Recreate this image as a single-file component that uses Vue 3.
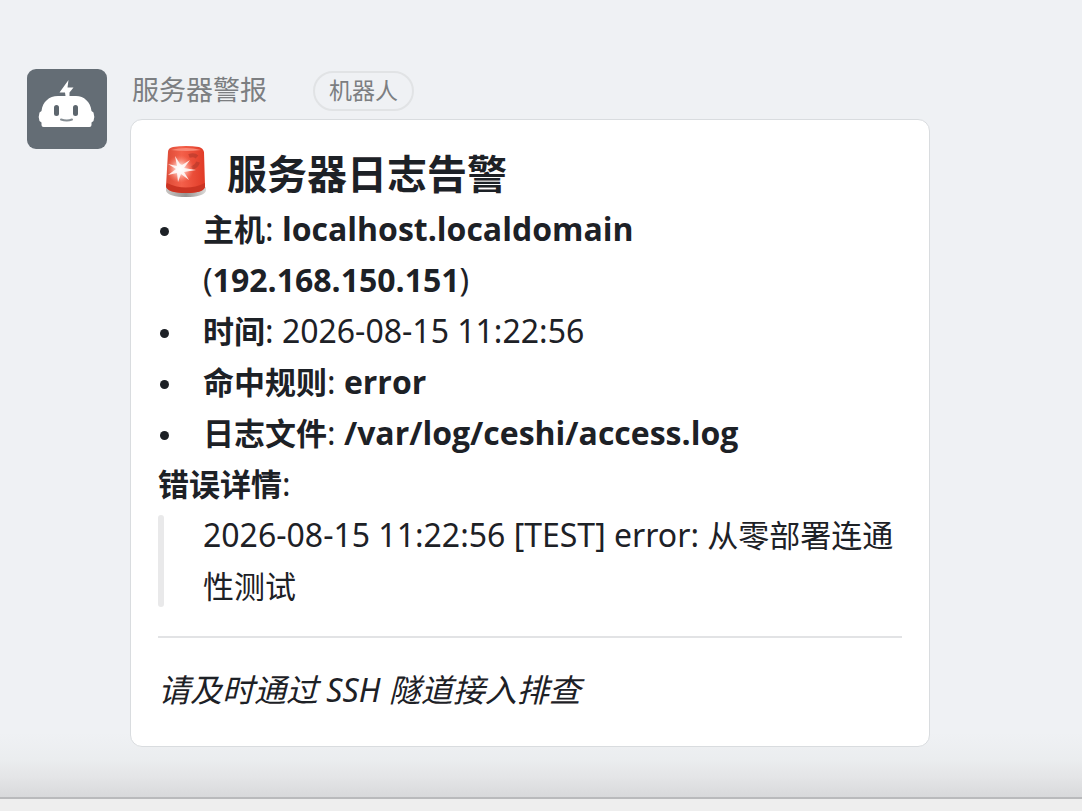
<script setup>
const rows = [
  { label: '主机', parts: [{ text: 'localhost.localdomain', bold: true }, { text: ' (' }, { text: '192.168.150.151', bold: true }, { text: ')' }] },
  { label: '时间', parts: [{ text: '2026-08-15 11:22:56' }] },
  { label: '命中规则', parts: [{ text: 'error', bold: true }] },
  { label: '日志文件', parts: [{ text: '/var/log/ceshi/access.log', bold: true }] },
]
</script>

<template>
  <div class="page">
    <main class="chat">
      <article class="message">
        <svg class="avatar" viewBox="0 0 80 80" role="img" aria-label="机器人头像">
          <rect width="80" height="80" rx="9" fill="#646d75" />
          <path d="M41.500 11 32.500 23.500h5.500L38.500 27H31C22 27 15.500 33 14.500 42l-2 1.500q-1.500 4 0 8.500l2 1.500v2.500q0 2 2 2h46q2 0 2-2v-2.500l2-1.500q1.500-4.500 0-8.500l-2-1.500C63.500 33 57 27 49 27h-6.500v-3.500l4-5h-6z" fill="#fff" />
          <rect x="27" y="36" width="5" height="11" rx="2.500" fill="#5d666e" />
          <rect x="46" y="36" width="5" height="11" rx="2.500" fill="#5d666e" />
          <path d="M34 50.500q6 2 11 0" fill="none" stroke="#858d93" stroke-width="2" stroke-linecap="round" />
        </svg>
        <div class="body">
          <header class="sender">
            <span class="name">服务器警报</span>
            <span class="tag">机器人</span>
          </header>
          <section class="card">
            <h1 class="title">
              <svg class="siren" viewBox="0 0 42 54" aria-hidden="true">
                <defs>
                  <linearGradient id="glass" x1="0" y1="0" x2="1" y2="0">
                    <stop offset="0" stop-color="#dc4a36" />
                    <stop offset=".4" stop-color="#f4604a" />
                    <stop offset="1" stop-color="#e03a26" />
                  </linearGradient>
                  <linearGradient id="base" x1="0" y1="0" x2="1" y2="0">
                    <stop offset="0" stop-color="#c9c6c4" />
                    <stop offset=".5" stop-color="#979391" />
                    <stop offset="1" stop-color="#dcdad8" />
                  </linearGradient>
                  <radialGradient id="glow">
                    <stop offset="0" stop-color="#fff" />
                    <stop offset=".35" stop-color="#ffd9d2" stop-opacity=".8" />
                    <stop offset="1" stop-color="#ff8a75" stop-opacity="0" />
                  </radialGradient>
                </defs>
                <path d="M1 42q20 8 40 0v4q-3 6-20 6T1 46z" fill="url(#base)" />
                <path d="M3 7q0-4 5-5 13-2 26 0 4 1 5 5l1 34q0 7-19 7T1 41z" fill="url(#glass)" />
                <path d="M2 38q19 9 38 0v3q0 7-19 7T1 41z" fill="#cb3423" />
                <path d="M6 5q15-4 30 0-15 2-30 0z" fill="#f98a78" />
                <path d="M24 11q5-2 8 1M33 17q-1 4-6 6" fill="none" stroke="#b5392b" stroke-width="4" opacity=".65" />
                <circle cx="15" cy="24" r="14" fill="url(#glow)" />
                <path d="m15 19-5-8 2 10-9-2 8 5-8 6 9-2 1 9 3-8 8 6-5-8 12-2-12-2 6-8-8 5z" fill="#fff" opacity=".85" />
              </svg>
              <span>服务器日志告警</span>
            </h1>
            <ul class="facts">
              <li v-for="row in rows" :key="row.label">
                <strong>{{ row.label }}</strong><span class="latin">: <template v-for="part in row.parts" :key="part.text"><strong v-if="part.bold" class="value">{{ part.text }}</strong><template v-else>{{ part.text }}</template></template></span>
              </li>
            </ul>
            <p class="line"><strong>错误详情</strong><span class="latin">:</span></p>
            <blockquote class="quote"><span class="latin">2026-08-15 11:22:56 [TEST] error: </span>从零部署连通性测试</blockquote>
            <hr class="rule" />
            <p class="line note"><em>请及时通过<span class="latin"> SSH </span>隧道接入排查</em></p>
          </section>
        </div>
      </article>
    </main>
    <footer class="composer"></footer>
  </div>
</template>

<style>
body {
  margin: 0;
}
</style>

<style scoped>
.page {
  box-sizing: border-box;
  min-height: 100vh;
  display: flex;
  flex-direction: column;
  background: #eff1f4;
  color: #1d2126;
  font-family: "Noto Sans CJK SC", sans-serif;
}
.chat {
  flex: 1;
  padding: 69px 152px 50px 27px;
  background: linear-gradient(to top, #d8d9db 0, #e4e5e7 20px, #ebedef 38px, #eff1f4 64px);
}
.message {
  display: flex;
  align-items: flex-start;
  gap: 23px;
}
.avatar {
  width: 80px;
  height: 80px;
  flex: none;
}
.body {
  flex: 1;
  min-width: 0;
}
.sender {
  display: flex;
  align-items: center;
  gap: 46px;
  height: 44px;
  padding-left: 2px;
  margin-bottom: 6px;
  color: #7c7e81;
}
.name {
  padding-bottom: 4px;
  font-size: 27px;
  line-height: 40px;
}
.tag {
  box-sizing: border-box;
  height: 40px;
  padding: 0 14px;
  border: 2px solid #e1e3e5;
  border-radius: 20px;
  font-size: 23px;
  line-height: 33px;
}
.card {
  padding: 22px 27px 32px;
  border: 1px solid #d9dcdf;
  border-radius: 12px;
  background: #fff;
  font-size: 31px;
  line-height: 51px;
}
.title {
  display: flex;
  align-items: center;
  gap: 20px;
  margin: 0;
  padding-left: 7px;
  font-size: 40px;
  font-weight: 700;
  line-height: 60px;
}
.siren {
  width: 42px;
  height: 54px;
}
.facts {
  margin: 0;
  padding: 0;
  list-style: none;
}
.facts li {
  display: flow-root;
  position: relative;
  padding-left: 45px;
}
.facts li::before {
  content: "";
  position: absolute;
  top: 25px;
  left: 2px;
  width: 9px;
  height: 9px;
  border-radius: 50%;
  background: #1d2126;
}
.latin {
  font-family: "Noto Sans", "Noto Sans CJK SC", sans-serif;
  font-size: 32px;
  line-height: 48px;
}
.value {
  font-family: "Open Sans", "Noto Sans", sans-serif;
  font-weight: 700;
}
.line {
  margin: 0;
}
.note {
  font-size: 32px;
}
.quote {
  position: relative;
  margin: 0;
  padding-left: 45px;
}
.quote::before {
  content: "";
  position: absolute;
  top: 7px;
  bottom: 3px;
  left: 0;
  width: 6px;
  border-radius: 3px;
  background: #e9e9ea;
}
.rule {
  height: 2px;
  margin: 26px 0 25px;
  border: 0;
  background: #e2e3e5;
}
.composer {
  height: 12px;
  border-top: 2px solid #b9babc;
  background: #eee;
}
</style>
